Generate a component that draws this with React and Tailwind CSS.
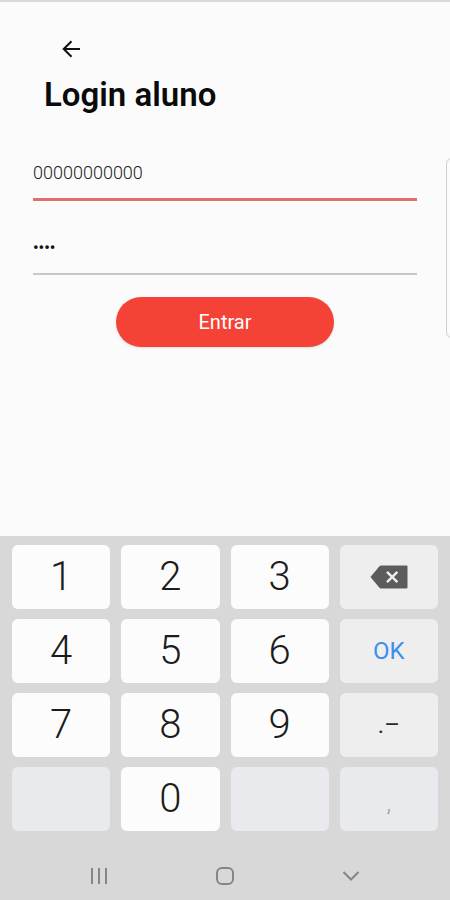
import React, { useState } from 'react';

const KEYS = [
  { id: '1', label: '1' },
  { id: '2', label: '2' },
  { id: '3', label: '3' },
  { id: 'backspace', kind: 'action' },
  { id: '4', label: '4' },
  { id: '5', label: '5' },
  { id: '6', label: '6' },
  { id: 'ok', label: 'OK', kind: 'action' },
  { id: '7', label: '7' },
  { id: '8', label: '8' },
  { id: '9', label: '9' },
  { id: 'symbols', label: '.–', kind: 'action' },
  { id: 'blank-left', kind: 'disabled' },
  { id: '0', label: '0' },
  { id: 'blank-right', kind: 'disabled' },
  { id: 'comma', label: ',', kind: 'disabled' },
];

const keyStyles = {
  digit: 'items-center bg-[#fcfcfc] text-[40px] font-light text-[#1c1c1c]',
  action: 'items-center bg-[#eeeeee]',
  disabled: 'items-end bg-[#e8eaed] pb-3',
};

function BackIcon() {
  return (
    <svg width="24" height="24" viewBox="0 0 24 24" fill="none" stroke="#111" strokeWidth="2" aria-hidden="true">
      <path d="M21 12H5M12.5 4.2L4.7 12l7.8 7.8" />
    </svg>
  );
}

function BackspaceIcon() {
  return (
    <svg width="38" height="24" viewBox="0 0 38 24" aria-hidden="true">
      <path d="M11 0.5H36.5a1 1 0 0 1 1 1v21a1 1 0 0 1-1 1H11a2 2 0 0 1-1.6-.8L.5 12 9.4 1.3a2 2 0 0 1 1.6-.8z" fill="#5c5c5c" />
      <path d="M17 6.8l10.4 10.4M27.4 6.8L17 17.2" stroke="#f0f0f0" strokeWidth="2.4" />
    </svg>
  );
}

function KeyContent({ id, label }) {
  if (id === 'backspace') return <BackspaceIcon />;
  if (id === 'ok') return <span className="text-2xl text-[#3d8fee]">{label}</span>;
  if (id === 'symbols') return <span className="text-2xl text-[#2a2a2a]">{label}</span>;
  if (id === 'comma') return <span className="text-2xl font-light text-[#9a9ca0]">{label}</span>;
  return label;
}

export default function App() {
  const [user, setUser] = useState('00000000000');
  const [password, setPassword] = useState('0000');

  const handleKey = (id) => {
    if (id === 'backspace') {
      setUser(user.slice(0, -1));
    } else if (/^\d$/.test(id)) {
      setUser(user + id);
    }
  };

  return (
    <div className="relative flex min-h-screen flex-col overflow-hidden border-t-2 border-[#d9d9d9] bg-[#fbfbfb] font-[Roboto,sans-serif]">
      {/* Login form */}
      <main className="flex-1 px-[33px] pt-[33px]">
        <button type="button" aria-label="Voltar" className="ml-6 block p-0.5">
          <BackIcon />
        </button>
        <h1 className="mt-3 ml-[11px] text-[33px] leading-10 font-semibold text-[#0a0a0a]">Login aluno</h1>

        <form className="mt-8" onSubmit={(e) => e.preventDefault()}>
          <input
            type="text"
            inputMode="numeric"
            aria-label="Usuário"
            value={user}
            onChange={(e) => setUser(e.target.value)}
            className="block h-[54px] w-full border-b-3 border-[#e0706e] bg-transparent text-lg font-light text-[#222] outline-none"
          />
          <input
            type="password"
            aria-label="Senha"
            value={password}
            onChange={(e) => setPassword(e.target.value)}
            className="mt-5 block h-[54px] w-full border-b-2 border-[#c8c8c8] bg-transparent text-base font-medium text-[#111] outline-none"
          />
          <button
            type="submit"
            className="mx-auto mt-[22px] block h-[50px] w-[57%] rounded-full bg-[#f44336] text-xl text-white shadow-sm"
          >
            Entrar
          </button>
        </form>
      </main>

      {/* Edge panel handle, cut off by the side of the screen */}
      <div className="absolute top-[156px] -right-2 h-[180px] w-3 rounded-lg border border-[#cfcfcf] bg-[#fcfcfc]" />

      {/* Numeric keyboard */}
      <section aria-label="Teclado" className="bg-[#d8d8d8] px-3 pt-[9px]">
        <div className="grid grid-cols-4 gap-x-[11px] gap-y-[10px]">
          {KEYS.map(({ id, label, kind = 'digit' }) => (
            <button
              key={id}
              type="button"
              aria-label={label ? undefined : id}
              disabled={kind === 'disabled'}
              onClick={() => handleKey(id)}
              className={`flex h-16 justify-center rounded-md ${keyStyles[kind]}`}
            >
              <KeyContent id={id} label={label} />
            </button>
          ))}
        </div>
      </section>

      {/* System navigation */}
      <nav className="grid grid-cols-3 justify-items-center bg-[#d8d8d8] px-9 pt-9 pb-[15px]">
        <button type="button" aria-label="Recentes">
          <svg width="18" height="18" viewBox="0 0 18 18" stroke="#858585" strokeWidth="2" aria-hidden="true">
            <path d="M2 1v16M9 1v16M16 1v16" />
          </svg>
        </button>
        <button type="button" aria-label="Início">
          <svg width="18" height="18" viewBox="0 0 18 18" fill="none" stroke="#858585" strokeWidth="2" aria-hidden="true">
            <rect x="1" y="1" width="16" height="16" rx="5" />
          </svg>
        </button>
        <button type="button" aria-label="Ocultar teclado">
          <svg width="18" height="18" viewBox="0 0 18 18" fill="none" stroke="#858585" strokeWidth="2" aria-hidden="true">
            <path d="M1.5 5L9 12.5 16.5 5" />
          </svg>
        </button>
      </nav>
    </div>
  );
}
